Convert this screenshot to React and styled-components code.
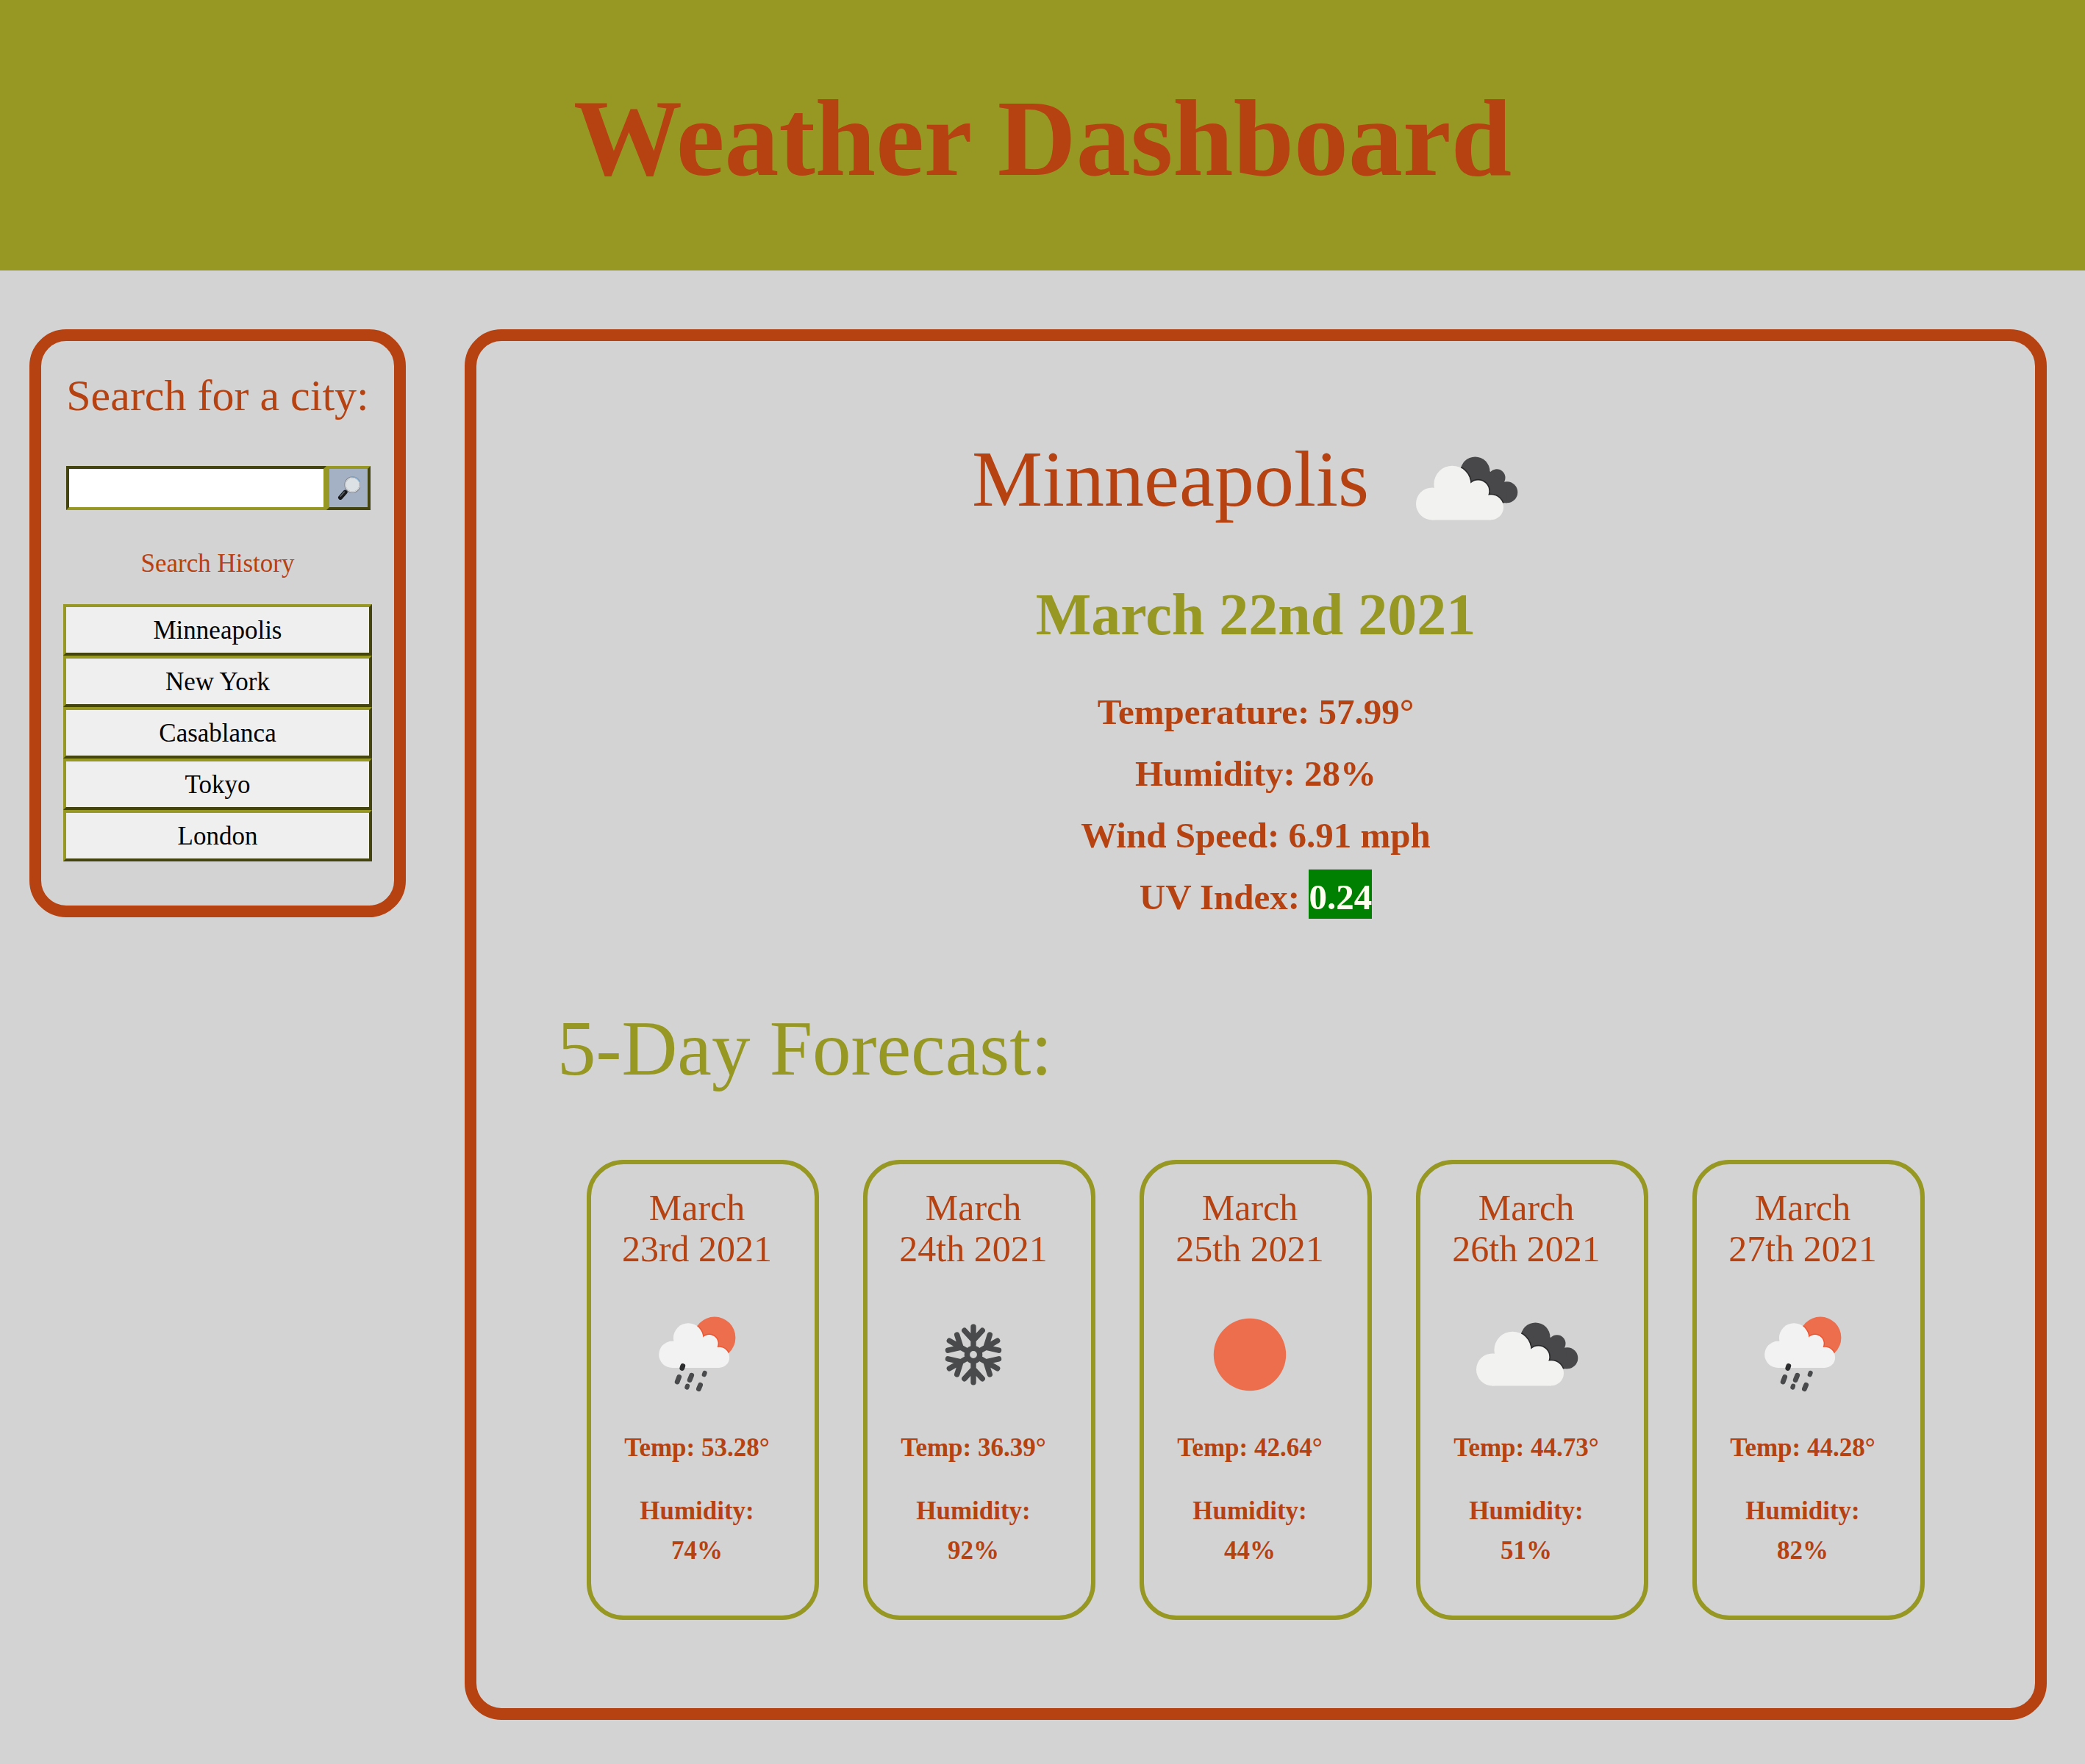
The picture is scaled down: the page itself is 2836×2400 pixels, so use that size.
import React, { useId } from "react";
import styled, { createGlobalStyle } from "styled-components";

const rust = "#b64211";
const olive = "#979824";

const GlobalStyle = createGlobalStyle`
  * { box-sizing: border-box; }
  body {
    margin: 0;
    background: #d3d3d3;
    color: ${rust};
    font-family: "Liberation Serif", "Times New Roman", serif;
  }
  h1, h2, h3, p, ul { margin: 0; padding: 0; }
  button, input { font-family: inherit; }
`;

const Header = styled.header`
  background: ${olive};
  padding: 96px 40px 88px;
  text-align: center;
`;

const Title = styled.h1`
  font-size: 148px;
  line-height: 184px;
  font-weight: 700;
`;

const Layout = styled.div`
  display: flex;
  align-items: flex-start;
  gap: 80px;
  padding: 80px 52px 60px 40px;
`;

const Panel = styled.section`
  min-width: 0;
  border: 16px solid ${rust};
  border-radius: 50px;
`;

const Sidebar = styled(Panel).attrs({ as: "aside" })`
  flex: 0 0 512px;
  padding: 38px 30px 60px;
  text-align: center;
`;

const Main = styled(Panel).attrs({ as: "main" })`
  flex: 1;
  padding: 101px 110px 120px;
`;

const SearchLabel = styled.label`
  display: block;
  font-size: 60px;
  line-height: 72px;
  white-space: nowrap;
`;

const SearchForm = styled.form`
  display: flex;
  height: 60px;
  margin: 60px 2px 0 4px;
`;

const SearchInput = styled.input`
  flex: 1;
  min-width: 0;
  border: 4px inset ${olive};
  border-radius: 0;
  background: #fff;
  font-size: 35px;
  padding: 0 8px;
`;

const SearchButton = styled.button`
  display: flex;
  flex: none;
  align-items: center;
  justify-content: center;
  width: 60px;
  padding: 0;
  border: 4px outset ${olive};
  background: #a4b1c4;
`;

const HistoryTitle = styled.h3`
  margin-top: 52px;
  font-size: 35px;
  line-height: 42px;
  font-weight: 400;
`;

const HistoryList = styled.ul`
  margin-top: 34px;
  list-style: none;
`;

const HistoryButton = styled.button`
  display: block;
  width: 100%;
  height: 70px;
  padding: 2px 0 0;
  border: 4px outset ${olive};
  background: #efefef;
  color: #000;
  font-size: 35px;
`;

const CityRow = styled.div`
  display: flex;
  justify-content: center;
  align-items: flex-start;
  gap: 32px;
`;

const City = styled.h2`
  font-size: 108px;
  line-height: 174px;
  font-weight: 400;
`;

const Today = styled.h3`
  margin-top: 23px;
  color: ${olive};
  font-size: 80px;
  line-height: 96px;
  font-weight: 700;
  text-align: center;
`;

const Details = styled.div`
  margin-top: 43px;
  font-size: 49px;
  line-height: 84px;
  font-weight: 700;
  text-align: center;
`;

const UvBadge = styled.span`
  padding: 10px 0 2px;
  background: green;
  color: ivory;
`;

const ForecastTitle = styled.h2`
  margin-top: 100px;
  color: ${olive};
  font-size: 105px;
  line-height: 128px;
  font-weight: 400;
`;

const ForecastRow = styled.div`
  display: flex;
  gap: 60px;
  margin-top: 87px;
  padding: 0 40px;
`;

const Card = styled.article`
  display: flex;
  flex: 1;
  flex-direction: column;
  align-items: center;
  padding: 31px 52px 61px 36px;
  border: 6px solid ${olive};
  border-radius: 50px;
  text-align: center;
`;

const CardDate = styled.h3`
  margin-bottom: 16px;
  font-size: 50px;
  line-height: 56px;
  font-weight: 400;
`;

const CardText = styled.p`
  font-size: 35px;
  line-height: 54px;
  font-weight: 700;

  & + & { margin-top: 32px; }
`;

const WeatherSvg = styled.svg`
  display: block;
  flex: none;
  width: 200px;
  height: 200px;
`;

const charcoal = "#484a4b";
const sunColor = "#ec6e4c";

function CloudShape({ puffs, base, grow = 0 }) {
  return (
    <>
      {puffs.map(([x, y, r]) => (
        <circle key={x} cx={x} cy={y} r={r + grow} />
      ))}
      <path d={base} />
    </>
  );
}

const bigCloud = {
  puffs: [[54, 120.4, 22], [81.4, 93.7, 25], [116.5, 103.2, 14.8], [134, 125.3, 17]],
  base: "M54 142.4V105H62L82 94H104L116 102L130 110L134 120V142.4Z",
};

const smallCloud = {
  puffs: [[66.3, 99.9, 18.1], [88.1, 77.5, 20.2], [116.6, 85, 12], [130, 103.9, 14.1]],
  base: "M66 118V88H72L88 78H106L116 84L127 92L130 100V118Z",
};

function Clouds() {
  const clip = useId();
  const back = (
    <>
      <circle cx="112.5" cy="76.5" r="20" />
      <circle cx="141.8" cy="85" r="11.7" />
      <circle cx="155.8" cy="104.7" r="14.5" />
      <path d="M112 76H132L142 84L154 92L156 119.2H134L104 100Z" />
    </>
  );
  return (
    <WeatherSvg viewBox="0 0 200 200" role="img" aria-label="Cloudy">
      <clipPath id={clip}>{back}</clipPath>
      <g fill="#48484a">{back}</g>
      <g clipPath={`url(#${clip})`} fill="#28282a">
        <CloudShape {...bigCloud} grow={1.6} />
      </g>
      <g fill="#f2f2f0"><CloudShape {...bigCloud} /></g>
    </WeatherSvg>
  );
}

function Rain() {
  const clip = useId();
  return (
    <WeatherSvg viewBox="0 0 200 200" role="img" aria-label="Rain and sun">
      <clipPath id={clip}><circle cx="124" cy="76.9" r="28.4" /></clipPath>
      <circle cx="124" cy="76.9" r="28.4" fill={sunColor} />
      <g clipPath={`url(#${clip})`} fill="#ee5330">
        <CloudShape {...smallCloud} grow={1.4} />
      </g>
      <g fill="#f2f2f2"><CloudShape {...smallCloud} /></g>
      <g stroke={charcoal} strokeWidth="6.8" strokeLinecap="round">
        <path d="M75.7 130.4L73.2 137M92.7 128.2L90.2 134.6M104.6 141.4L102.4 146.6" />
        <path d="M110.6 125L109.8 127.2M87 142.8L86.4 144.6" strokeWidth="6.2" />
        <path d="M80.8 115.4L79.8 118.4" stroke="#2c2d2e" />
      </g>
    </WeatherSvg>
  );
}

function Snow() {
  return (
    <WeatherSvg viewBox="0 0 200 200" role="img" aria-label="Snow">
      <g fill="none" stroke={charcoal} strokeWidth="7.4" strokeLinecap="round" strokeLinejoin="round">
        <circle cx="100" cy="100" r="8.6" />
        {[0, 60, 120, 180, 240, 300].map((angle) => (
          <path
            key={angle}
            transform={`rotate(${angle} 100 100)`}
            d="M100 89V62.3M87.8 67.2L100 80.5L112.2 67.2"
          />
        ))}
      </g>
    </WeatherSvg>
  );
}

function Sun() {
  return (
    <WeatherSvg viewBox="0 0 200 200" role="img" aria-label="Clear sky">
      <circle cx="100" cy="100" r="49.2" fill={sunColor} />
    </WeatherSvg>
  );
}

function Magnifier() {
  return (
    <svg width="32" height="32" viewBox="0 0 32 32" aria-hidden="true">
      <path d="M15 18.5L12 21.5" stroke="#6d6d6f" strokeWidth="3" />
      <path d="M11.6 21.6L5 29" stroke="#17191b" strokeWidth="6" strokeLinecap="round" />
      <path d="M10.4 21.2L5 27.2" stroke="#62676b" strokeWidth="1.4" strokeLinecap="round" />
      <circle cx="21.5" cy="11.5" r="10.2" fill="#dce1e6" stroke="#85898e" strokeWidth="2" />
      <circle cx="21.5" cy="11.5" r="9.8" fill="none" stroke="#f0f2f4" strokeWidth="1" />
      <path d="M20 1.2A10.4 10.4 0 0 1 31.8 13" fill="none" stroke="#79a9d2" strokeWidth="1.2" />
    </svg>
  );
}

const icons = { clouds: Clouds, rain: Rain, snow: Snow, sun: Sun };

const cities = ["Minneapolis", "New York", "Casablanca", "Tokyo", "London"];

const forecast = [
  { date: "March 23rd 2021", icon: "rain", temp: "53.28", humidity: 74 },
  { date: "March 24th 2021", icon: "snow", temp: "36.39", humidity: 92 },
  { date: "March 25th 2021", icon: "sun", temp: "42.64", humidity: 44 },
  { date: "March 26th 2021", icon: "clouds", temp: "44.73", humidity: 51 },
  { date: "March 27th 2021", icon: "rain", temp: "44.28", humidity: 82 },
];

export default function App() {
  return (
    <>
      <GlobalStyle />
      <Header>
        <Title>Weather Dashboard</Title>
      </Header>
      <Layout>
        <Sidebar>
          <SearchLabel htmlFor="city">Search for a city:</SearchLabel>
          <SearchForm onSubmit={(event) => event.preventDefault()}>
            <SearchInput id="city" type="text" />
            <SearchButton type="submit" aria-label="Search">
              <Magnifier />
            </SearchButton>
          </SearchForm>
          <HistoryTitle>Search History</HistoryTitle>
          <HistoryList>
            {cities.map((city) => (
              <li key={city}>
                <HistoryButton type="button">{city}</HistoryButton>
              </li>
            ))}
          </HistoryList>
        </Sidebar>
        <Main>
          <CityRow>
            <City>Minneapolis</City>
            <Clouds />
          </CityRow>
          <Today>March 22nd 2021</Today>
          <Details>
            <p>Temperature: 57.99°</p>
            <p>Humidity: 28%</p>
            <p>Wind Speed: 6.91 mph</p>
            <p>UV Index: <UvBadge>0.24</UvBadge></p>
          </Details>
          <ForecastTitle>5-Day Forecast:</ForecastTitle>
          <ForecastRow>
            {forecast.map(({ date, icon, temp, humidity }) => {
              const Icon = icons[icon];
              return (
                <Card key={date}>
                  <CardDate>{date}</CardDate>
                  <Icon />
                  <CardText>Temp: {temp}°</CardText>
                  <CardText>Humidity: {humidity}%</CardText>
                </Card>
              );
            })}
          </ForecastRow>
        </Main>
      </Layout>
    </>
  );
}
